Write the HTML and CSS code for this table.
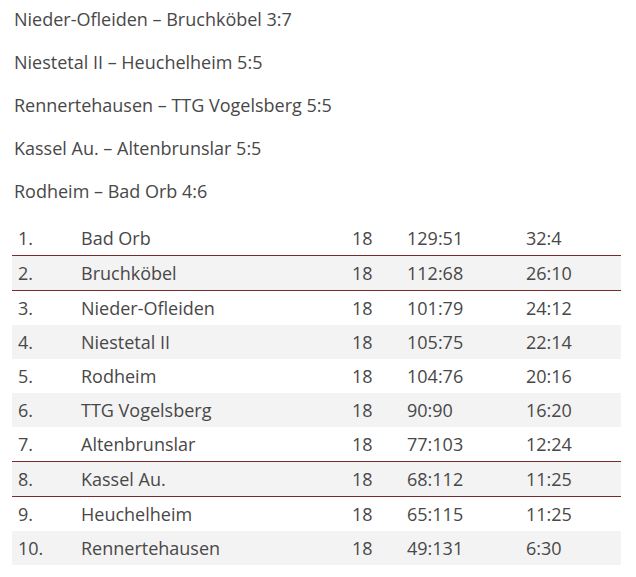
FILE: index.html
```html
<!DOCTYPE html>
<html lang="de">
<head>
<meta charset="utf-8">
<link rel="stylesheet" href="styles.css">
</head>
<body>
<div class="content">
  <p class="result">Nieder-Ofleiden – Bruchköbel 3:7</p>
  <p class="result">Niestetal II – Heuchelheim 5:5</p>
  <p class="result">Rennertehausen – TTG Vogelsberg 5:5</p>
  <p class="result">Kassel Au. – Altenbrunslar 5:5</p>
  <p class="result">Rodheim – Bad Orb 4:6</p>
  <table class="standings">
    <colgroup>
      <col class="c-rank"><col class="c-team"><col class="c-games"><col class="c-goals"><col class="c-points">
    </colgroup>
    <tbody>
      <tr><td>1.</td><td>Bad Orb</td><td>18</td><td>129:51</td><td>32:4</td></tr>
      <tr class="marked"><td>2.</td><td>Bruchköbel</td><td>18</td><td>112:68</td><td>26:10</td></tr>
      <tr><td>3.</td><td>Nieder-Ofleiden</td><td>18</td><td>101:79</td><td>24:12</td></tr>
      <tr><td>4.</td><td>Niestetal II</td><td>18</td><td>105:75</td><td>22:14</td></tr>
      <tr><td>5.</td><td>Rodheim</td><td>18</td><td>104:76</td><td>20:16</td></tr>
      <tr><td>6.</td><td>TTG Vogelsberg</td><td>18</td><td>90:90</td><td>16:20</td></tr>
      <tr><td>7.</td><td>Altenbrunslar</td><td>18</td><td>77:103</td><td>12:24</td></tr>
      <tr class="marked"><td>8.</td><td>Kassel Au.</td><td>18</td><td>68:112</td><td>11:25</td></tr>
      <tr><td>9.</td><td>Heuchelheim</td><td>18</td><td>65:115</td><td>11:25</td></tr>
      <tr><td>10.</td><td>Rennertehausen</td><td>18</td><td>49:131</td><td>6:30</td></tr>
    </tbody>
  </table>
</div>
</body>
</html>
```
FILE: styles.css
```css
html, body {
  margin: 0;
  padding: 0;
  background: #ffffff;
}
body {
  font-family: "Open Sans", "Noto Sans", sans-serif;
  font-size: 18px;
  color: #484848;
}
.content {
  padding: 6px 15px 0 12px;
}
.result {
  margin: 0 0 17px 2px;
  line-height: 26px;
}
.standings {
  width: 609px;
  border-collapse: collapse;
  table-layout: fixed;
  margin-top: 3px;
}
.c-rank { width: 63px; }
.c-team { width: 271px; }
.c-games { width: 55px; }
.c-goals { width: 119px; }
.c-points { width: 101px; }
.standings td {
  padding: 0 6px;
  height: 34px;
  line-height: 34px;
  white-space: nowrap;
}
.standings tr:nth-child(even) td {
  background: #f3f3f3;
}
.standings tr.marked td {
  border-top: 1px solid #7b2b2b;
  border-bottom: 1px solid #7b2b2b;
}
```
